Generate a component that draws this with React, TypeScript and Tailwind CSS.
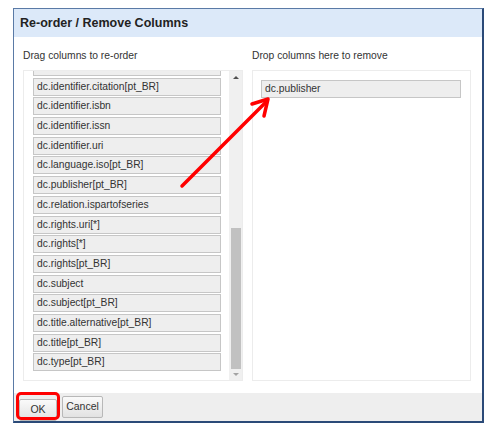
import React from "react";

const items = [
  "dc.identifier.citation[pt_BR]",
  "dc.identifier.isbn",
  "dc.identifier.issn",
  "dc.identifier.uri",
  "dc.language.iso[pt_BR]",
  "dc.publisher[pt_BR]",
  "dc.relation.ispartofseries",
  "dc.rights.uri[*]",
  "dc.rights[*]",
  "dc.rights[pt_BR]",
  "dc.subject",
  "dc.subject[pt_BR]",
  "dc.title.alternative[pt_BR]",
  "dc.title[pt_BR]",
  "dc.type[pt_BR]",
];

function Item({ label }: { label: string }) {
  return (
    <div className="h-[18px] box-border border border-[#c6c6c6] bg-[#eeeeee] pl-[3px] text-[10.3px] leading-[16px] text-[#333] whitespace-nowrap overflow-hidden">
      {label}
    </div>
  );
}

export default function App() {
  return (
    <div
      className="relative w-[490px] h-[426px] bg-white pt-[8px] pl-[13px]"
      style={{ fontFamily: '"Liberation Sans", Arial, sans-serif' }}
    >
      <div className="w-[471px] h-[415px] box-border border border-[#5a7aa6] border-r-2 border-b-2 border-r-[#2b4a78] border-b-[#2b4a78] flex flex-col bg-white">
        <div className="h-[28px] bg-[#dce9f9] pl-[6px] flex items-center font-bold text-[12.5px] text-[#222]">
          Re-order / Remove Columns
        </div>
        <div className="flex-1 flex pl-[9px] pt-[12px] gap-[9px]">
          <div className="w-[220px] flex flex-col">
            <div className="h-[14px] leading-[14px] text-[10.3px] text-[#333] mb-[7px]">
              Drag columns to re-order
            </div>
            <div className="h-[311px] box-border border border-[#ececec] flex overflow-hidden">
              <div className="flex-1 pl-[9px] pr-[8px] overflow-hidden">
                <div className="flex flex-col gap-[1.7px] mt-[-13px]">
                  <Item label="dc.identifier.citation" />
                  {items.map((it) => (
                    <Item key={it} label={it} />
                  ))}
                </div>
              </div>
              <div className="w-[13px] bg-[#f0f0f0] flex flex-col items-center">
                <div className="h-[12px] flex items-center justify-center">
                  <div className="w-0 h-0 border-l-[3px] border-r-[3px] border-b-[3px] border-l-transparent border-r-transparent border-b-[#505050]" />
                </div>
                <div className="h-[145px]" />
                <div className="w-[10px] h-[141px] bg-[#c1c1c1]" />
                <div className="flex-1 flex items-center justify-center">
                  <div className="w-0 h-0 border-l-[3px] border-r-[3px] border-t-[3px] border-l-transparent border-r-transparent border-t-[#a3a3a3]" />
                </div>
              </div>
            </div>
          </div>
          <div className="w-[219px] flex flex-col">
            <div className="h-[14px] leading-[14px] text-[10.3px] text-[#333] mb-[7px]">
              Drop columns here to remove
            </div>
            <div className="h-[311px] box-border border border-[#ececec] pl-[8px] pr-[9px] pt-[9px]">
              <div className="h-[18px] box-border border border-[#c6c6c6] bg-[#eeeeee] pl-[3px] text-[10.3px] leading-[16px] text-[#333]">
                dc.publisher
              </div>
            </div>
          </div>
        </div>
        <div className="h-[28px] bg-[#eeeeee] flex items-start pt-[3px] pl-[5px] gap-[5px]">
          <div className="relative">
            <button className="w-[38px] h-[22px] box-border border border-[#b8b8b8] rounded-[2px] bg-gradient-to-b from-[#fafafa] to-[#e2e2e2] text-[10.5px] text-[#333]">
              OK
            </button>
            <div className="absolute left-[-3px] top-[-4px] w-[44px] h-[28px] border-[3px] border-[#ff0000] rounded-[5px]" />
          </div>
          <button className="w-[41px] h-[22px] box-border border border-[#b8b8b8] rounded-[2px] bg-gradient-to-b from-[#fafafa] to-[#e2e2e2] text-[10.5px] text-[#333]">
            Cancel
          </button>
        </div>
      </div>
      <svg
        className="absolute left-0 top-0 pointer-events-none"
        width="490"
        height="426"
        viewBox="0 0 490 426"
      >
        <line x1="182" y1="186" x2="266" y2="102" stroke="#ff0000" strokeWidth="3.5" strokeLinecap="round" />
        <polyline
          points="252,104 268,99 264,116"
          fill="none"
          stroke="#ff0000"
          strokeWidth="3.5"
          strokeLinecap="round"
          strokeLinejoin="round"
        />
      </svg>
    </div>
  );
}
